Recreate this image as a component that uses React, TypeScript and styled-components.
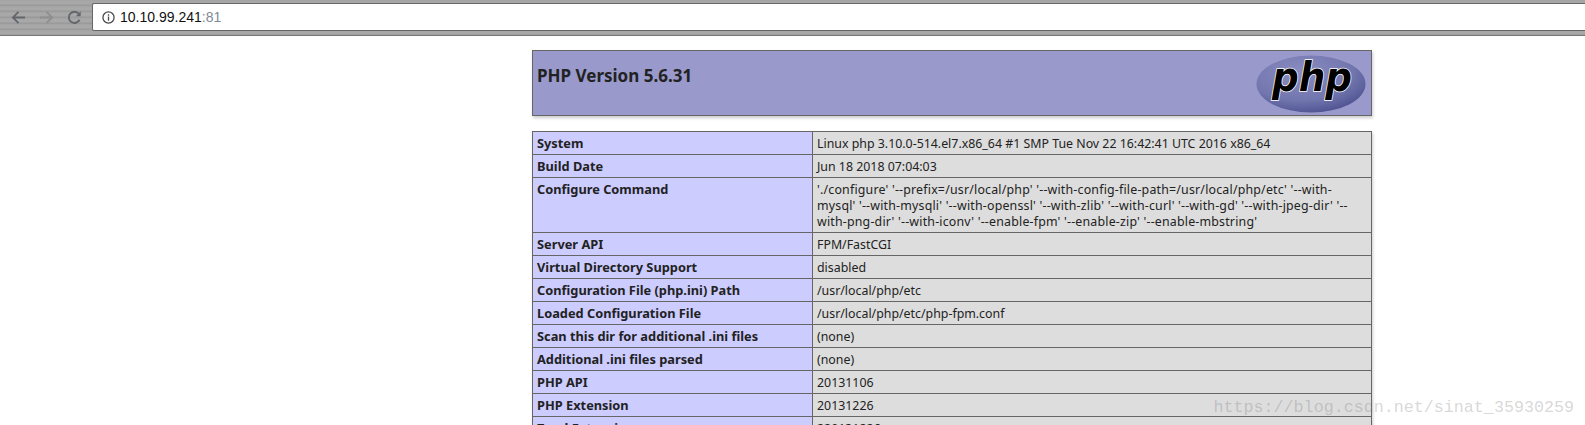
import React from 'react'
import styled, { createGlobalStyle } from 'styled-components'

const rows: { label: string; value: string; tall?: boolean }[] = [
    { label: 'System', value: 'Linux php 3.10.0-514.el7.x86_64 #1 SMP Tue Nov 22 16:42:41 UTC 2016 x86_64' },
    { label: 'Build Date', value: 'Jun 18 2018 07:04:03' },
    {
        label: 'Configure Command',
        value: "'./configure' '--prefix=/usr/local/php' '--with-config-file-path=/usr/local/php/etc' '--with-\nmysql' '--with-mysqli' '--with-openssl' '--with-zlib' '--with-curl' '--with-gd' '--with-jpeg-dir' '--\nwith-png-dir' '--with-iconv' '--enable-fpm' '--enable-zip' '--enable-mbstring'",
        tall: true,
    },
    { label: 'Server API', value: 'FPM/FastCGI' },
    { label: 'Virtual Directory Support', value: 'disabled' },
    { label: 'Configuration File (php.ini) Path', value: '/usr/local/php/etc' },
    { label: 'Loaded Configuration File', value: '/usr/local/php/etc/php-fpm.conf' },
    { label: 'Scan this dir for additional .ini files', value: '(none)' },
    { label: 'Additional .ini files parsed', value: '(none)' },
    { label: 'PHP API', value: '20131106' },
    { label: 'PHP Extension', value: '20131226' },
    { label: 'Zend Extension', value: '220131226' },
]

const PhpLogo = () => (
    <svg width="110" height="58" viewBox="0 0 110 58">
        <defs>
            <radialGradient id="oval" cx="40%" cy="30%" r="75%">
                <stop offset="0%" stopColor="#8a8dc0" />
                <stop offset="65%" stopColor="#7276ae" />
                <stop offset="100%" stopColor="#4c508f" />
            </radialGradient>
        </defs>
        <ellipse cx="55" cy="29" rx="54.5" ry="28.5" fill="url(#oval)" />
        <LogoText x="56" y="36" textLength="80" lengthAdjust="spacingAndGlyphs">
            php
        </LogoText>
    </svg>
)

const BackIcon = () => (
    <svg width="15" height="15" viewBox="0 0 16 16" fill="none" stroke="#63676b" strokeWidth="2">
        <path d="M15 8H2M8 2 2 8l6 6" />
    </svg>
)

const ForwardIcon = () => (
    <svg width="15" height="15" viewBox="0 0 16 16" fill="none" stroke="#8e8e8e" strokeWidth="2">
        <path d="M1 8h13M8 2l6 6-6 6" />
    </svg>
)

const ReloadIcon = () => (
    <svg width="15" height="15" viewBox="0 0 16 16" fill="none" stroke="#63676b" strokeWidth="2">
        <path d="M13.4 10.4A6 6 0 1 1 12.6 4" />
        <path d="M14.6 1.4v5.2H9.4z" fill="#63676b" stroke="none" />
    </svg>
)

const InfoIcon = () => (
    <svg width="13" height="13" viewBox="0 0 14 14" fill="none" stroke="#4a4a4a" strokeWidth="1.4">
        <circle cx="7" cy="7" r="6" />
        <path d="M7 6v4.4M7 3.4v1.6" />
    </svg>
)

export default function App() {
    return (
        <Page>
            <GlobalStyle />
            <Toolbar>
                <NavButtons>
                    <BackIcon />
                    <ForwardIcon />
                    <ReloadIcon />
                </NavButtons>
                <AddressBar>
                    <InfoIcon />
                    <Url>
                        10.10.99.241<Port>:81</Port>
                    </Url>
                </AddressBar>
            </Toolbar>
            <Content>
                <Header>
                    <Title>PHP Version 5.6.31</Title>
                    <PhpLogo />
                </Header>
                <InfoTable>
                    <tbody>
                        {rows.map((row) => (
                            <Row key={row.label} $tall={row.tall}>
                                <Label>{row.label}</Label>
                                <Value $tall={row.tall}>{row.value}</Value>
                            </Row>
                        ))}
                    </tbody>
                </InfoTable>
            </Content>
            <Watermark>https://blog.csdn.net/sinat_35930259</Watermark>
        </Page>
    )
}

const GlobalStyle = createGlobalStyle`
    html, body {
        margin: 0;
        height: 425px;
        overflow: hidden;
        background: #fff;
    }
`

const Page = styled.div`
    position: relative;
    height: 425px;
    overflow: hidden;
    font-family: "Noto Sans", sans-serif;
    color: #222;
`

const Toolbar = styled.div`
    display: flex;
    align-items: stretch;
    height: 36px;
    box-sizing: border-box;
    padding-top: 3px;
    padding-bottom: 4px;
    background: repeating-linear-gradient(180deg, #a3a3a3 0, #aaaaaa 3px, #979797 6px);
    border-bottom: 1px solid #777;
`

const NavButtons = styled.div`
    display: flex;
    align-items: center;
    width: 92px;
    padding-left: 11px;
    gap: 13px;
    box-sizing: border-box;
`

const AddressBar = styled.div`
    flex: 1;
    display: flex;
    align-items: center;
    gap: 5px;
    padding-left: 9px;
    background: #fff;
    border-top: 1px solid #666;
    border-bottom: 1px solid #666;
    border-left: 1px solid #666;
    border-radius: 2px 0 0 2px;
`

const Url = styled.span`
    font-family: "Liberation Sans", sans-serif;
    font-size: 14px;
    color: #111;
`

const Port = styled.span`
    color: #7f8a96;
`

const Content = styled.div`
    width: 840px;
    margin-left: 532px;
    padding-top: 14px;
`

const Header = styled.div`
    display: flex;
    align-items: flex-start;
    justify-content: space-between;
    height: 66px;
    box-sizing: border-box;
    padding: 4px 5px 0 4px;
    background: #9999cc;
    border: 1px solid #666;
    box-shadow: 1px 2px 3px #ccc;
`

const Title = styled.h1`
    margin: 11px 0 0;
    font-size: 17px;
    font-weight: 700;
    line-height: 20px;
`

const LogoText = styled.text`
    font-family: "DejaVu Sans", sans-serif;
    font-size: 41px;
    font-weight: 700;
    font-style: italic;
    text-anchor: middle;
    fill: #000;
    stroke: #fff;
    stroke-width: 1.6px;
    paint-order: stroke;
`

const InfoTable = styled.table`
    width: 840px;
    margin-top: 15px;
    border-collapse: collapse;
    table-layout: fixed;
    font-size: 12.36px;
    line-height: 16px;
    box-shadow: 1px 2px 3px #ccc;
`

const Row = styled.tr<{ $tall?: boolean }>`
    height: ${({ $tall }) => ($tall ? '55px' : '23px')};
`

const Label = styled.td`
    width: 280px;
    box-sizing: border-box;
    padding: 3px 4px 3px 4px;
    vertical-align: top;
    font-size: 12.8px;
    font-weight: 700;
    background: #ccccff;
    border: 1px solid #666;
`

const Value = styled.td<{ $tall?: boolean }>`
    padding: 4px 4px 2px;
    vertical-align: top;
    white-space: pre-line;
    letter-spacing: ${({ $tall }) => ($tall ? '0.2px' : 'normal')};
    background: #dddddd;
    border: 1px solid #666;
`

const Watermark = styled.div`
    position: absolute;
    right: 11px;
    bottom: 8px;
    font-family: "Liberation Mono", monospace;
    font-size: 16.7px;
    color: rgba(120, 120, 120, 0.3);
`
